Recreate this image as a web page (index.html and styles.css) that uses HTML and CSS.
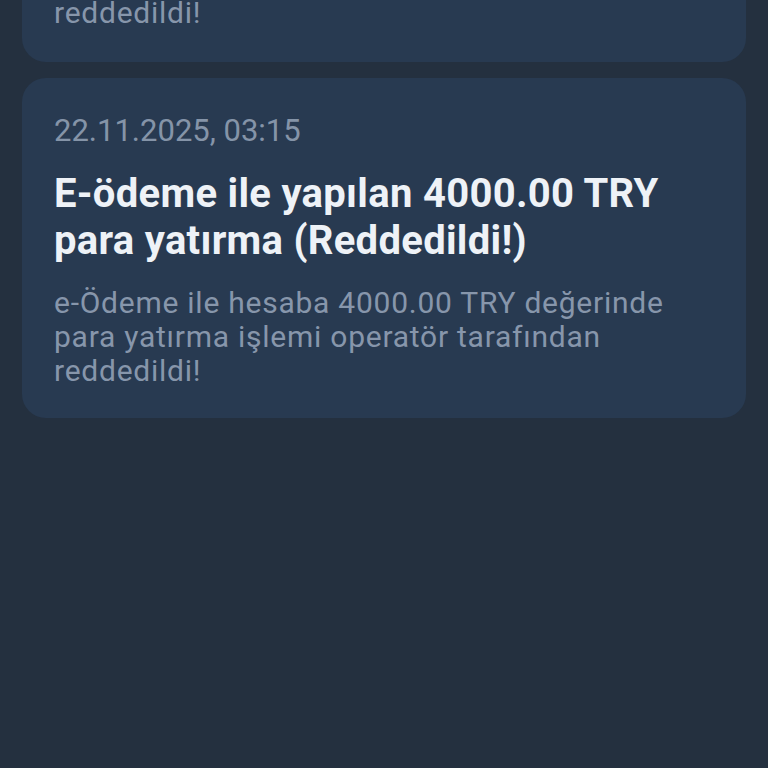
FILE: index.html
```html
<!DOCTYPE html>
<html lang="tr">
<head>
<meta charset="utf-8">
<title>Bildirimler</title>
<link rel="stylesheet" href="styles.css">
</head>
<body>
<main class="list">
  <article class="card">
    <div class="date">22.11.2025, 03:12</div>
    <h2 class="title">E-ödeme ile yapılan 4000.00 TRY para yatırma (Reddedildi!)</h2>
    <p class="desc">e-Ödeme ile hesaba 4000.00 TRY değerinde para yatırma işlemi operatör tarafından reddedildi!</p>
  </article>
  <article class="card">
    <div class="date">22.11.2025, 03:15</div>
    <h2 class="title">E-ödeme ile yapılan 4000.00 TRY para yatırma (Reddedildi!)</h2>
    <p class="desc">e-Ödeme ile hesaba 4000.00 TRY değerinde para yatırma işlemi operatör tarafından reddedildi!</p>
  </article>
</main>
</body>
</html>
```
FILE: styles.css
```css
html, body {
  margin: 0;
  padding: 0;
  background: #24303f;
  height: 100%;
  overflow: hidden;
}
body {
  font-family: Roboto, "Noto Sans", sans-serif;
}
.list {
  display: flex;
  flex-direction: column;
  gap: 16px;
  padding: 0 22px;
  margin-top: -280px;
}
.card {
  background: #283a51;
  border-radius: 24px;
  padding: 35px 32px 0;
  height: 340px;
  box-sizing: border-box;
}
.date {
  font-size: 31px;
  line-height: 36px;
  color: #8594a8;
}
.title {
  margin: 21px 0 0;
  font-size: 40px;
  line-height: 47px;
  font-weight: 700;
  letter-spacing: 0.3px;
  color: #eef2f7;
}
.desc {
  margin: 22px 0 0;
  font-size: 30px;
  line-height: 34px;
  color: #8796ab;
  letter-spacing: 0.75px;
}
.list .card:first-child {
  height: 342px;
}
```
